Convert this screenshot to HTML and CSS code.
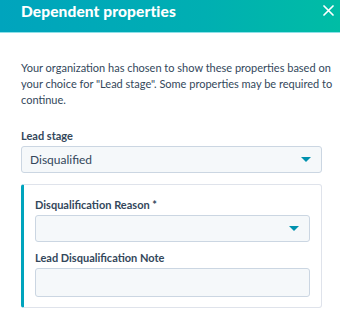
FILE: index.html
```html
<!DOCTYPE html>
<html lang="en">
<head>
  <meta charset="UTF-8" />
  <title>Dependent properties</title>
  <link rel="stylesheet" href="styles.css">
</head>
<body>

  <div class="panel-header">
    <h1>Dependent properties</h1>
    <button class="close-btn" aria-label="Close">
      <svg width="11" height="11" viewBox="0 0 11 11">
        <path d="M1 1 L10 10 M10 1 L1 10" stroke="#fff" stroke-width="1.7" stroke-linecap="round" />
      </svg>
    </button>
  </div>

  <div class="panel-body">
    <p class="intro">Your organization has chosen to show these properties based on your choice for "Lead stage". Some properties may be required to continue.</p>

    <label class="field-label">Lead stage</label>
    <div class="select-box">
      <span>Disqualified</span>
      <span class="caret"></span>
    </div>

    <div class="dependent-card">
      <label class="field-label">Disqualification Reason *</label>
      <div class="select-box small">
        <span></span>
        <span class="caret"></span>
      </div>

      <label class="field-label">Lead Disqualification Note</label>
      <div class="text-box"></div>
    </div>
  </div>

</body>
</html>
```

FILE: styles.css
```css
body {
  font-family: Lato, "Noto Sans", Arial, sans-serif;
  background-color: #fff;
  color: #33475b;
  margin: 0;
  width: 340px;
  height: 329px;
  overflow: hidden;
}

.panel-header {
  display: flex;
  align-items: flex-start;
  justify-content: space-between;
  height: 33px;
  padding: 2px 6px 0 21px;
  box-sizing: border-box;
  background: linear-gradient(90deg, #00a4bd 0%, #00afb2 60%, #00bda5 100%);
  border-bottom: 1px solid #8ee0e8;
}

.panel-header h1 {
  margin: 0;
  color: #fff;
  font-size: 15.5px;
  line-height: 19px;
  font-weight: 900;
  letter-spacing: 0.1px;
}

.close-btn {
  background: none;
  border: none;
  padding: 0;
  width: 11px;
  height: 11px;
  display: flex;
  margin-top: 3px;
  cursor: pointer;
}

.panel-body {
  padding: 27px 18px 0 21px;
}

.intro {
  margin: 0 -12px 21px 0;
  font-size: 11px;
  line-height: 16px;
}

.field-label {
  display: block;
  font-size: 11px;
  line-height: 13px;
  font-weight: 700;
  margin-bottom: 4px;
}

.select-box {
  display: flex;
  align-items: center;
  justify-content: space-between;
  height: 25px;
  padding: 0 10px 0 8px;
  background-color: #f5f8fa;
  border: 1px solid #cbd6e2;
  border-radius: 3px;
  font-size: 12px;
}

.caret {
  width: 0;
  height: 0;
  border-left: 5px solid transparent;
  border-right: 5px solid transparent;
  border-top: 5px solid #0091ae;
}

.dependent-card {
  margin-top: 11px;
  padding: 13px 11px 10px 11px;
  border: 1px solid #dfe3eb;
  border-left: 3px solid #00a4bd;
  border-radius: 3px;
}

.select-box.small {
  margin-bottom: 9px;
}

.text-box {
  height: 27px;
  background-color: #f5f8fa;
  border: 1px solid #cbd6e2;
  border-radius: 3px;
}
```
